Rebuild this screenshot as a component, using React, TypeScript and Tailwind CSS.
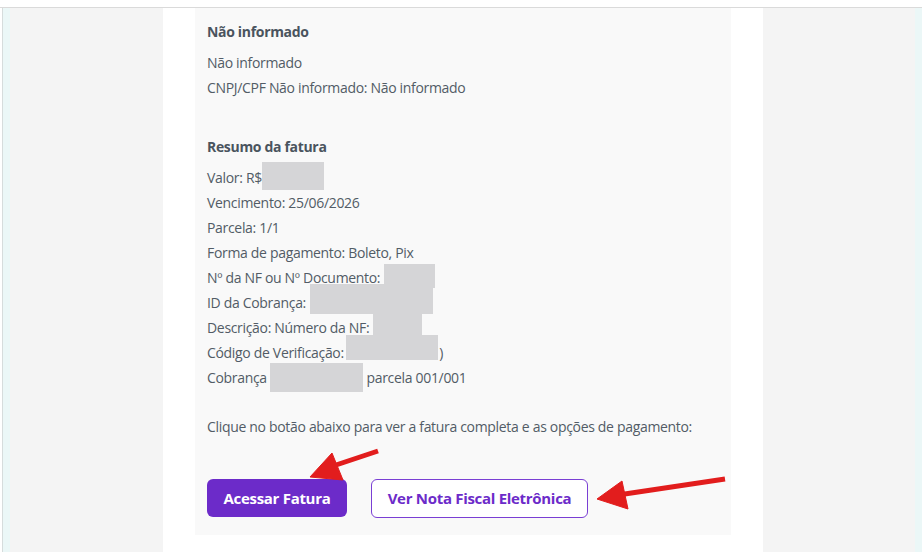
import type { ReactNode } from 'react';

function Line({ children }: { children: ReactNode }) {
  return <p className="h-[25px] leading-[25px] whitespace-nowrap">{children}</p>;
}

function Redact({ className }: { className: string }) {
  return (
    <span className="relative inline-block h-[25px] align-top">
      <span className={`absolute bg-[#d5d5d7] ${className}`} />
    </span>
  );
}

function Arrows() {
  return (
    <svg
      className="pointer-events-none absolute left-0 top-0"
      width="922"
      height="552"
      viewBox="0 0 922 552"
    >
      <g fill="#e21d1d" stroke="#e21d1d" strokeLinejoin="round">
        <line x1="378" y1="451" x2="330" y2="467" strokeWidth="5" />
        <polygon points="310,477 332,453 343,480" strokeWidth="1" />
        <line x1="725" y1="479" x2="618" y2="495" strokeWidth="5" />
        <polygon points="597,499 622,481 628,509" strokeWidth="1" />
      </g>
    </svg>
  );
}

export default function App() {
  return (
    <div
      className="relative h-[552px] w-[922px] overflow-hidden bg-white text-[14px] text-[#525c66]"
      style={{ fontFamily: '"Open Sans", "Noto Sans", sans-serif' }}
    >
      <div className="h-[8px] border-b border-[#dadada] bg-white" />
      <div className="flex h-[544px]">
        <div className="w-[2px] bg-white" />
        <div className="w-px bg-[#d6dcdc]" />
        <div className="w-[7px] bg-[#ebf7f7]" />
        <div className="w-[153px] bg-[#f4f4f4]" />
        <div className="w-[600px] bg-white px-8">
          <div className="bg-[#f9f9f9] px-3 pb-[17px] pt-[11px] tracking-[-0.32px]">
            <h3 className="mb-[6px] h-[25px] font-bold leading-[25px] text-[#4a545e]">Não informado</h3>
            <Line>Não informado</Line>
            <Line>CNPJ/CPF Não informado: Não informado</Line>

            <h3 className="mb-[6px] mt-[34px] h-[25px] font-bold leading-[25px] text-[#4a545e]">
              Resumo da fatura
            </h3>
            <Line>
              Valor: R$
              <Redact className="left-0 -top-[3px] h-[28px] w-[62px]" />
            </Line>
            <Line>Vencimento: 25/06/2026</Line>
            <Line>Parcela: 1/1</Line>
            <Line>Forma de pagamento: Boleto, Pix</Line>
            <Line>
              Nº da NF ou Nº Documento: 1
              <Redact className="-left-[7px] -top-px h-[24px] w-[51px]" />
            </Line>
            <Line>
              ID da Cobrança: 1
              <Redact className="-left-[7px] -top-[6px] h-[30px] w-[123px]" />
            </Line>
            <Line>
              Descrição: Número da NF: 1
              <Redact className="-left-[7px] -top-px h-[21px] w-[49px]" />
            </Line>
            <Line>
              Código de Verificação:{' '}
              <Redact className="-left-px -top-[5px] h-[25px] w-[92px]" />
              <span className="ml-[92px]">)</span>
            </Line>
            <Line>
              Cobrança{' '}
              <span className="relative inline-block h-[25px] w-[93px] align-top">
                <span className="absolute -top-[2px] left-0 h-[29px] w-[93px] bg-[#d5d5d7]" />
              </span>{' '}
              parcela 001/001
            </Line>

            <p className="mt-[24px] h-[25px] whitespace-nowrap leading-[25px]">
              Clique no botão abaixo para ver a fatura completa e as opções de pagamento:
            </p>

            <div className="mt-[40px] flex gap-6">
              <button
                type="button"
                className="h-[38px] w-[140px] rounded-md bg-[#6c2bc9] text-[15px] font-bold tracking-[-0.3px] text-white"
              >
                Acessar Fatura
              </button>
              <button
                type="button"
                className="h-[39px] w-[217px] rounded-md border border-[#7a3fd4] bg-white text-[15px] font-bold tracking-[-0.3px] text-[#6c2bc9]"
              >
                Ver Nota Fiscal Eletrônica
              </button>
            </div>
          </div>
        </div>
        <div className="flex-1 bg-[#f4f4f4]" />
        <div className="w-[7px] bg-[#ebf7f7]" />
      </div>
      <Arrows />
    </div>
  );
}
